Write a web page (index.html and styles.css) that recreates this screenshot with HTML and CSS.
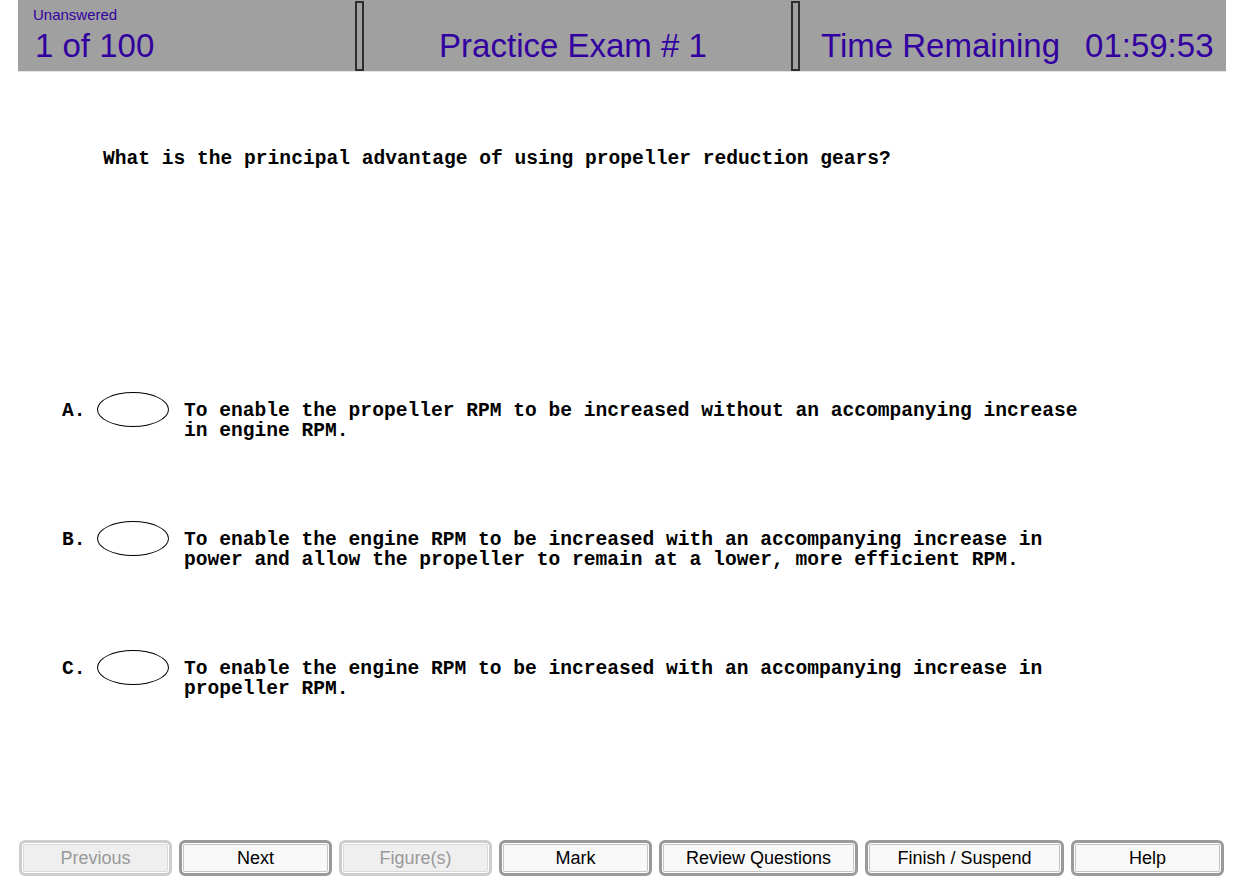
FILE: index.html
```html
<!DOCTYPE html>
<html lang="en">
<head>
    <meta charset="UTF-8">
    <title>Practice Exam # 1</title>
    <link rel="stylesheet" href="styles.css">
</head>
<body>
    <div class="page">
        <div class="header">
            <div class="header-cell status">
                <div class="status-label">Unanswered</div>
                <div class="big-text">1 of 100</div>
            </div>
            <div class="divider"></div>
            <div class="header-cell title">
                <div class="big-text">Practice Exam # 1</div>
            </div>
            <div class="divider"></div>
            <div class="header-cell timer">
                <div class="big-text">Time Remaining<span class="clock">01:59:53</span></div>
            </div>
        </div>

        <div class="main">
            <p class="question">What is the principal advantage of using propeller reduction gears?</p>

            <div class="options">
                <div class="option">
                    <span class="option-letter">A.</span>
                    <span class="bubble"></span>
                    <span class="option-text">To enable the propeller RPM to be increased without an accompanying increase<br>in engine RPM.</span>
                </div>
                <div class="option">
                    <span class="option-letter">B.</span>
                    <span class="bubble"></span>
                    <span class="option-text">To enable the engine RPM to be increased with an accompanying increase in<br>power and allow the propeller to remain at a lower, more efficient RPM.</span>
                </div>
                <div class="option">
                    <span class="option-letter">C.</span>
                    <span class="bubble"></span>
                    <span class="option-text">To enable the engine RPM to be increased with an accompanying increase in<br>propeller RPM.</span>
                </div>
            </div>
        </div>

        <div class="footer">
            <button class="nav-btn" disabled>Previous</button>
            <button class="nav-btn">Next</button>
            <button class="nav-btn" disabled>Figure(s)</button>
            <button class="nav-btn">Mark</button>
            <button class="nav-btn wide">Review Questions</button>
            <button class="nav-btn wide">Finish / Suspend</button>
            <button class="nav-btn">Help</button>
        </div>
    </div>
</body>
</html>
```

FILE: styles.css
```css
body {
    margin: 0;
    padding: 0;
    background: #ffffff;
    font-family: Arial, "Liberation Sans", sans-serif;
}
.page {
    height: 878px;
    display: flex;
    flex-direction: column;
}
.header {
    display: flex;
    height: 71px;
    margin: 0 15px 0 18px;
    background: #a0a0a0;
    border-bottom: 1px solid #e4e4e4;
    color: #3300a0;
}
.header-cell {
    box-sizing: border-box;
}
.status {
    width: 337px;
    padding: 6px 0 0 15px;
}
.status-label {
    font-size: 15px;
    line-height: 17px;
}
.status .big-text {
    margin-top: 5px;
    margin-left: 2px;
}
.big-text {
    font-size: 33px;
    line-height: 36px;
    white-space: nowrap;
}
.title {
    width: 427px;
    padding-top: 28px;
    text-align: center;
    padding-right: 9px;
}
.timer {
    flex: 1;
    padding-top: 28px;
    padding-left: 21px;
}
.clock {
    margin-left: 25px;
}
.divider {
    box-sizing: border-box;
    width: 9px;
    height: 70px;
    margin-top: 1px;
    border: 2px solid #2e2e2e;
    background: #a0a0a0;
}
.main {
    flex: 1;
    padding-top: 77px;
    font-family: "Liberation Mono", "Courier New", monospace;
    font-weight: bold;
    font-size: 19.6px;
    line-height: 20px;
    color: #000000;
}
.question {
    margin: 0 0 223px 103px;
    white-space: nowrap;
}
.options {
    display: flex;
    flex-direction: column;
    gap: 80px;
}
.option {
    display: flex;
    align-items: flex-start;
    padding-left: 62px;
}
.option-letter {
    width: 35px;
    padding-top: 9px;
}
.bubble {
    box-sizing: border-box;
    width: 72px;
    height: 35px;
    border: 1.5px solid #000000;
    border-radius: 50%;
    margin-right: 15px;
    flex-shrink: 0;
}
.option-text {
    padding-top: 9px;
    white-space: nowrap;
}
.footer {
    display: flex;
    gap: 7px;
    padding: 0 0 2px 19px;
}
.nav-btn {
    box-sizing: border-box;
    width: 153px;
    height: 36px;
    border: 3px solid #9a9a9a;
    border-radius: 6px;
    box-shadow: inset 0 0 0 1px #ffffff, inset 0 0 0 2px #c4c4c4;
    background: #f9f9f9;
    font-family: Arial, "Liberation Sans", sans-serif;
    font-size: 18px;
    color: #000000;
    padding: 0;
    cursor: pointer;
}
.nav-btn.wide {
    width: 199px;
}
.nav-btn:disabled {
    border-color: #cdcdcd;
    box-shadow: inset 0 0 0 1px #ffffff, inset 0 0 0 2px #d8d8d8;
    background: #efefef;
    color: #999999;
    cursor: default;
}
```
